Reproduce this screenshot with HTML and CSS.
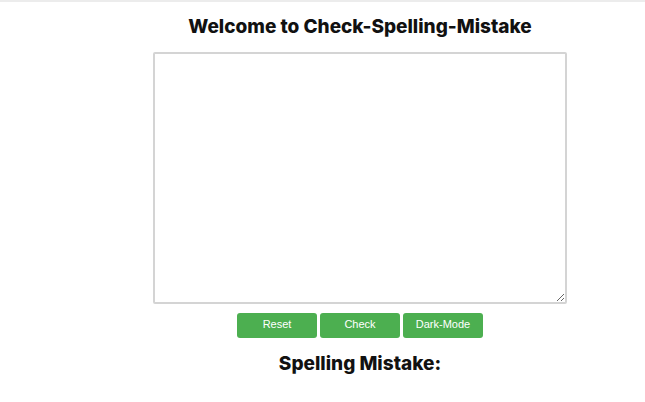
FILE: index.html
```html
<!DOCTYPE html>
<html>
<head>
<meta charset="utf-8">
<link rel="stylesheet" href="styles.css">
</head>
<body>
<div class="topline"></div>
<main class="container">
  <h1 class="title">Welcome to Check-Spelling-Mistake</h1>
  <textarea class="editor"></textarea>
  <div class="buttons">
    <button class="btn">Reset</button>
    <button class="btn">Check</button>
    <button class="btn">Dark-Mode</button>
  </div>
  <h2 class="subtitle">Spelling Mistake:</h2>
</main>
</body>
</html>
```
FILE: styles.css
```css
html, body {
  margin: 0;
  padding: 0;
  background: #fff;
}
.topline {
  height: 2px;
  background: #ececec;
}
.container {
  margin-left: 75px;
  display: flex;
  flex-direction: column;
  align-items: center;
  font-family: Inter, "Open Sans", sans-serif;
  color: #111;
}
.title {
  margin: 14px 0 0;
  font-size: 19px;
  font-weight: 800;
  line-height: 22px;
  letter-spacing: 0;
}
.editor {
  margin-top: 14px;
  width: 414px;
  height: 252px;
  box-sizing: border-box;
  border: 2px solid #d4d4d4;
  border-radius: 2px;
  resize: both;
  padding: 4px;
  outline: none;
}
.buttons {
  margin-top: 9px;
  display: flex;
  gap: 3px;
}
.btn {
  width: 80px;
  height: 25px;
  border: none;
  border-radius: 3px;
  background: #4caf50;
  color: #fff;
  font-family: "Liberation Sans", Arial, sans-serif;
  font-size: 11px;
  line-height: 23px;
  padding: 0 0 2px;
}
.subtitle {
  margin: 15px 0 0;
  font-size: 19px;
  font-weight: 800;
  line-height: 22px;
  letter-spacing: 0;
}
```
